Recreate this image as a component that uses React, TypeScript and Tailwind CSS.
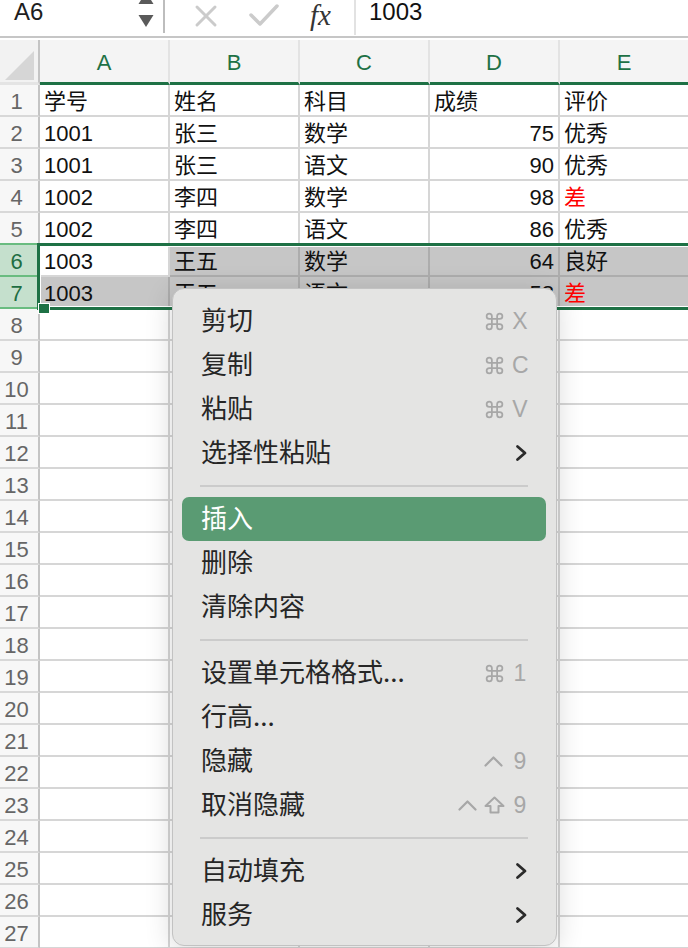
import React from "react";
import { Command } from "lucide-react";

const FONT = { fontFamily: '"Liberation Sans", "Noto Sans CJK SC", sans-serif' };
const CJK = { fontFamily: '"Noto Sans CJK SC", "Liberation Sans", sans-serif' };

const data: string[][] = [
  ["学号", "姓名", "科目", "成绩", "评价"],
  ["1001", "张三", "数学", "75", "优秀"],
  ["1001", "张三", "语文", "90", "优秀"],
  ["1002", "李四", "数学", "98", "差"],
  ["1002", "李四", "语文", "86", "优秀"],
  ["1003", "王五", "数学", "64", "良好"],
  ["1003", "王五", "语文", "58", "差"],
];

function Caret() {
  return (
    <svg width="19" height="12" viewBox="0 0 19 12" fill="none">
      <polyline points="1.5,10.5 9.5,2.5 17.5,10.5" stroke="#a7a7a7" strokeWidth="2.2" strokeLinecap="round" strokeLinejoin="round" />
    </svg>
  );
}

function Shift() {
  return (
    <svg width="21" height="18" viewBox="0 0 21 18" fill="none">
      <path d="M10.5 1.5 L19.5 10 H14.5 V16.5 H6.5 V10 H1.5 Z" stroke="#a7a7a7" strokeWidth="2" strokeLinejoin="round" />
    </svg>
  );
}

function Chevron() {
  return (
    <svg width="13" height="18" viewBox="0 0 13 18" fill="none">
      <polyline points="2.5,2.5 10,9 2.5,15.5" stroke="#2b2b2b" strokeWidth="2.8" strokeLinecap="round" strokeLinejoin="round" />
    </svg>
  );
}

function Key({ k }: { k: string }) {
  return (
    <span className="text-[23px] leading-none text-[#a7a7a7] w-[16px] text-center" style={FONT}>
      {k}
    </span>
  );
}

type Item =
  | { kind: "item"; label: string; right?: React.ReactNode; active?: boolean }
  | { kind: "sep" };

const cmd = (k: string) => (
  <div className="flex items-center gap-[7px]">
    <Command size={21} strokeWidth={2} color="#a7a7a7" />
    <Key k={k} />
  </div>
);

const items: Item[] = [
  { kind: "item", label: "剪切", right: cmd("X") },
  { kind: "item", label: "复制", right: cmd("C") },
  { kind: "item", label: "粘贴", right: cmd("V") },
  { kind: "item", label: "选择性粘贴", right: <Chevron /> },
  { kind: "sep" },
  { kind: "item", label: "插入", active: true },
  { kind: "item", label: "删除" },
  { kind: "item", label: "清除内容" },
  { kind: "sep" },
  { kind: "item", label: "设置单元格格式...", right: cmd("1") },
  { kind: "item", label: "行高..." },
  {
    kind: "item",
    label: "隐藏",
    right: (
      <div className="flex items-center gap-[9px]">
        <Caret />
        <Key k="9" />
      </div>
    ),
  },
  {
    kind: "item",
    label: "取消隐藏",
    right: (
      <div className="flex items-center gap-[7px]">
        <Caret />
        <Shift />
        <Key k="9" />
      </div>
    ),
  },
  { kind: "sep" },
  { kind: "item", label: "自动填充", right: <Chevron /> },
  { kind: "item", label: "服务", right: <Chevron /> },
];

function ContextMenu() {
  return (
    <div className="absolute left-[172px] top-[288px] w-[385px] rounded-[12px] bg-[#e4e4e3] border border-[#c2c2c2] pt-[10px] pb-[8px] pl-[9px] pr-[10px] shadow-[0_4px_28px_rgba(0,0,0,0.16)]">
      {items.map((it, i) =>
        it.kind === "sep" ? (
          <div key={i} className="h-[22px] flex items-center px-[18px]">
            <div className="h-[2px] w-full bg-[#cbcbcb]" />
          </div>
        ) : (
          <div
            key={i}
            className={
              it.active
                ? "h-[44px] flex items-center justify-between pl-[19px] pr-[18px] rounded-[7px] bg-[#5a9b73] text-white"
                : "h-[44px] flex items-center justify-between pl-[19px] pr-[18px] rounded-[7px] text-[#262626]"
            }
          >
            <span className="text-[26px] leading-none pb-[4px]" style={CJK}>
              {it.label}
            </span>
            {it.right}
          </div>
        )
      )}
    </div>
  );
}

function FormulaBar() {
  return (
    <div className="h-[38px] flex border-b-2 border-[#c6c6c6] bg-white" style={FONT}>
      <div className="w-[163px] flex items-start justify-between pl-[14px] pr-[9px]">
        <span className="text-[24px] leading-[24px] text-[#1e1e1e]">A6</span>
        <svg width="16" height="28" viewBox="0 0 16 28">
          <polygon points="0.5,4 15.5,4 8,-8" fill="#5a5a5a" />
          <polygon points="0.5,15 15.5,15 8,27" fill="#5a5a5a" />
        </svg>
      </div>
      <div className="w-[2px] h-[33px] bg-[#bdbdbd]" />
      <div className="w-[189px] flex items-start">
        <svg width="24" height="24" viewBox="0 0 24 24" className="ml-[29px] mt-[4px]">
          <line x1="3" y1="3" x2="21" y2="21" stroke="#cbcbcb" strokeWidth="3" strokeLinecap="round" />
          <line x1="21" y1="3" x2="3" y2="21" stroke="#cbcbcb" strokeWidth="3" strokeLinecap="round" />
        </svg>
        <svg width="30" height="24" viewBox="0 0 30 24" className="ml-[31px] mt-[3px]">
          <polyline points="2,12 11,21 28,3" fill="none" stroke="#cbcbcb" strokeWidth="3.5" strokeLinecap="round" strokeLinejoin="round" />
        </svg>
        <span
          className="ml-[31px] text-[29px] leading-[30px] italic text-[#353535]"
          style={{ fontFamily: '"Liberation Serif", serif' }}
        >
          fx
        </span>
      </div>
      <div className="w-[2px] h-[35px] bg-[#e2e2e2]" />
      <span className="pl-[13px] text-[24px] leading-[24px] text-[#111]">1003</span>
    </div>
  );
}

function HeaderRow() {
  const cols = ["A", "B", "C", "D", "E"];
  return (
    <div className="flex h-[45px] mt-[2px]" style={FONT}>
      <div className="w-[40px] shrink-0 h-full bg-[#f2f2f2] border-r-2 border-r-[#c4c4c4] border-b-[3px] border-b-[#e4e4e4] relative">
        <svg width="38" height="42" viewBox="0 0 38 42" className="absolute left-0 top-0">
          <polygon points="5,40 34,40 34,11" fill="#d6d6d6" />
        </svg>
      </div>
      {cols.map((c) => (
        <div
          key={c}
          className="w-[130px] shrink-0 h-full bg-[#f4f4f4] border-r-2 border-r-[#e3e3e3] border-b-[3px] border-b-[#1e7145] flex items-center justify-center text-[22px] text-[#1e7145] pt-[3px]"
        >
          {c}
        </div>
      ))}
    </div>
  );
}

function Row({ r }: { r: number }) {
  const sel = r === 6 || r === 7;
  const greenBottom = r === 5 || r === 6 || r === 7;
  const vals = data[r - 1];
  let headerCls =
    "w-[40px] shrink-0 h-[32px] border-r-2 border-b-2 border-r-[#c4c4c4] flex items-center justify-center pr-[5px] pt-[3px] text-[22px] ";
  if (sel) headerCls += "bg-[#c5e0cd] text-[#1e6e42] border-b-[#69bc80]";
  else if (greenBottom) headerCls += "bg-[#f7f7f7] text-[#666666] border-b-[#69bc80]";
  else headerCls += "bg-[#f7f7f7] text-[#666666] border-b-[#d8d8d8]";

  return (
    <div className="flex h-[32px]" style={FONT}>
      <div className={headerCls}>{r}</div>
      {[0, 1, 2, 3, 4].map((c) => {
        const gray = (r === 6 && c > 0) || r === 7;
        const v = vals ? vals[c] : "";
        const right = c === 3 && r > 1;
        const red = v === "差";
        let cls =
          "w-[130px] shrink-0 h-[32px] border-r-2 border-b-2 flex items-center px-[4px] pt-[3px] text-[22px] whitespace-nowrap overflow-hidden ";
        cls += gray ? "bg-[#c6c6c6] border-[#adadad] " : "bg-white border-[#d6d6d6] ";
        cls += right ? "justify-end " : "justify-start ";
        cls += red ? "text-[#ff0000]" : "text-[#111111]";
        return (
          <div key={c} className={cls}>
            {v}
          </div>
        );
      })}
    </div>
  );
}

export default function App() {
  const rows = Array.from({ length: 27 }, (_, i) => i + 1);
  return (
    <div className="w-[688px] h-[948px] overflow-hidden relative bg-white">
      <FormulaBar />
      <HeaderRow />
      {rows.map((r) => (
        <Row key={r} r={r} />
      ))}
      <div className="absolute left-[37px] top-[243px] w-[700px] h-[67px] border-[3px] border-[#1e7145] shadow-[inset_0_0_0_1px_#ffffff] pointer-events-none" />
      <div className="absolute left-[38px] top-[303px] w-[12px] h-[11px] bg-[#1e7145] border border-white" />
      <ContextMenu />
    </div>
  );
}
